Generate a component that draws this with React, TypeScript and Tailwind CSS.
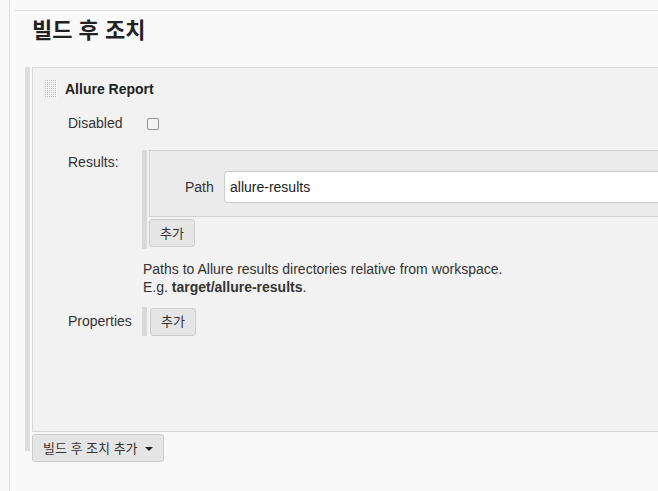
import React from 'react';

const font = { fontFamily: '"Liberation Sans", Arial, "Noto Sans CJK KR", sans-serif' };

function DragHandle() {
    return (
        <svg width="12" height="18" viewBox="0 0 12 18" className="block">
            <defs>
                <pattern id="dots" width="2" height="2" patternUnits="userSpaceOnUse">
                    <rect width="1" height="1" fill="#b5b5b5" />
                </pattern>
            </defs>
            <rect width="12" height="18" fill="#fafafa" />
            <rect width="12" height="18" fill="url(#dots)" />
        </svg>
    );
}

function AddButton({ label, caret }: { label: string; caret?: boolean }) {
    return (
        <button className="h-[28px] px-[10px] flex items-center gap-[7px] rounded-[3px] border border-[#cdcdcd] bg-[#e5e5e5] text-[13px] text-[#333] leading-none">
            <span>{label}</span>
            {caret && <span className="w-0 h-0 border-l-[4px] border-r-[4px] border-t-[4px] border-l-transparent border-r-transparent border-t-[#222] mt-[1px]" />}
        </button>
    );
}

export default function App() {
    return (
        <div className="w-[658px] h-[491px] overflow-hidden bg-[#f7f7f7] flex text-[#333] text-[14px]" style={font}>
            <div className="w-[9px] shrink-0 bg-[#f9f9f9]" />
            <div className="flex-1 border-l border-[#dddddd] bg-[#f9f9f9] pt-[10px] pl-[5px]">
                <div className="border-t border-[#dddddd] pl-[10px]">
                    <h2 className="pl-[7px] pt-[3px] h-[56px] text-[22px] font-bold text-[#222]">빌드 후 조치</h2>
                    <div className="h-[384px] border-l-[5px] border-[#dddddd] pl-[2px] flex flex-col">
                        <div className="h-[365px] shrink-0 border border-r-0 border-[#d9d9d9] bg-[#f2f2f2]">
                            <div className="flex items-center gap-[8px] pl-[12px] h-[42px]">
                                <DragHandle />
                                <span className="font-bold text-[14px] text-[#222]">Allure Report</span>
                            </div>
                            <div className="flex items-center h-[23px] mt-[2px] pl-[35px]">
                                <span className="w-[79px]">Disabled</span>
                                <span className="w-[12px] h-[12px] rounded-[2px] border border-[#8f8f8f] bg-[#f4f4f4]" />
                            </div>
                            <div className="flex pl-[35px] mt-[15px]">
                                <span className="w-[74px] pt-[2px]">Results:</span>
                                <div className="flex-1">
                                    <div className="border-l-[5px] border-[#d9d9d9] pl-[2px]">
                                        <div className="h-[67px] border border-r-0 border-[#d0d0d0] bg-[#ebebeb] flex items-center pl-[35px] pt-[7px]">
                                            <span className="w-[39px]">Path</span>
                                            <div className="flex-1 h-[32px] bg-white border border-r-0 border-[#cccccc] rounded-l-[4px] flex items-center pl-[5px] text-[14px] text-[#222]">
                                                allure-results
                                            </div>
                                        </div>
                                        <div className="pt-[2px] pb-[2px]">
                                            <AddButton label="추가" />
                                        </div>
                                    </div>
                                    <div className="mt-[11px] leading-[18px] pl-[1px]">
                                        <div>Paths to Allure results directories relative from workspace.</div>
                                        <div>E.g. <b>target/allure-results</b>.</div>
                                    </div>
                                </div>
                            </div>
                            <div className="flex items-center pl-[35px] mt-[11px]">
                                <span className="w-[74px]">Properties</span>
                                <div className="border-l-[5px] border-[#d9d9d9] pl-[3px] h-[29px] flex items-center">
                                    <AddButton label="추가" />
                                </div>
                            </div>
                        </div>
                        <div className="mt-[2px]">
                            <AddButton label="빌드 후 조치 추가" caret />
                        </div>
                    </div>
                </div>
            </div>
        </div>
    );
}
